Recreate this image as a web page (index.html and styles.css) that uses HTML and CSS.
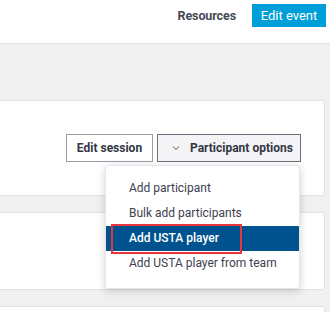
FILE: index.html
```
<html lang="en">
<head>
    <title>Event sessions</title>
    <meta charset="utf-8">
    <link rel="stylesheet" href="styles.css">
</head>
<body>
    <div class="topbar">
        <a class="resources">Resources</a>
        <a class="edit-event">Edit event</a>
    </div>
    <div class="content">
        <div class="card card-first">
            <div class="actions">
                <button class="btn">Edit session</button>
                <div class="menu-wrap">
                    <button class="btn btn-open">
                        <svg width="8" height="6" viewBox="0 0 8 6"><polyline points="1,1.5 4,4.5 7,1.5" fill="none" stroke="#555" stroke-width="1"/></svg>
                        Participant options
                    </button>
                    <div class="menu">
                        <div class="menu-item">Add participant</div>
                        <div class="menu-item">Bulk add participants</div>
                        <div class="menu-item active">Add USTA player<span class="mark"></span></div>
                        <div class="menu-item">Add USTA player from team</div>
                    </div>
                </div>
            </div>
        </div>
        <div class="card card-second"></div>
        <div class="card card-third"></div>
    </div>
</body>
</html>
```
FILE: styles.css
```
html, body {
    overflow: hidden;
}

body {
    margin: 0;
    padding: 0;
    background-color: #f0f0f0;
    font-family: "Roboto", sans-serif;
}

.topbar {
    height: 44px;
    background: #fff;
    border-bottom: 1px solid #e2e2e2;
    display: flex;
    justify-content: flex-end;
    align-items: flex-start;
    padding: 4px 4px 0 0;
    box-sizing: border-box;
}

.resources {
    font-weight: bold;
    font-size: 12.5px;
    letter-spacing: -0.1px;
    color: #454a52;
    line-height: 23px;
    margin-right: 16px;
}

.edit-event {
    background: #009ed8;
    color: #fff;
    font-size: 13px;
    line-height: 23px;
    width: 74px;
    text-align: center;
}

.content {
    padding-top: 56px;
    margin-left: -10px;
    margin-right: 5px;
}

.card {
    background: #fff;
    border: 1px solid #dce3ea;
    border-radius: 3px;
    box-sizing: border-box;
}

.card-first {
    height: 96px;
    padding-top: 33px;
}

.card-second {
    margin-top: 16px;
    height: 78px;
}

.card-third {
    margin-top: 16px;
    height: 10px;
}

.actions {
    display: flex;
    justify-content: flex-end;
    gap: 4px;
    padding-right: 23px;
}

.btn {
    font-family: "Roboto", sans-serif;
    font-weight: bold;
    font-size: 12px;
    color: #333744;
    background: #fff;
    border: 1px solid #9b9caa;
    height: 28px;
    width: 87px;
    padding: 0;
    margin: 0;
}

.btn-open {
    width: 144px;
    background: #f4f4f6;
    border-color: #6f6f7c;
    padding: 0 0 0 14px;
    display: flex;
    align-items: center;
    gap: 10px;
}

.menu-wrap {
    position: relative;
}

.menu {
    position: absolute;
    top: 31px;
    right: 1px;
    width: 195px;
    background: #fff;
    border: 1px solid #e4e6ea;
    border-radius: 3px;
    box-shadow: 0 2px 8px rgba(0, 0, 0, 0.18);
    padding: 10px 0 12px 0;
    box-sizing: border-box;
    z-index: 2;
}

.menu-item {
    position: relative;
    height: 25px;
    line-height: 25px;
    padding-left: 23px;
    font-size: 12px;
    color: #3e4150;
}

.menu-item.active {
    background: #00538f;
    color: #fff;
    font-weight: 500;
}

.mark {
    position: absolute;
    left: 5px;
    top: -2px;
    width: 131px;
    height: 30px;
    border: 2px solid #e8343d;
    box-sizing: border-box;
}
```
